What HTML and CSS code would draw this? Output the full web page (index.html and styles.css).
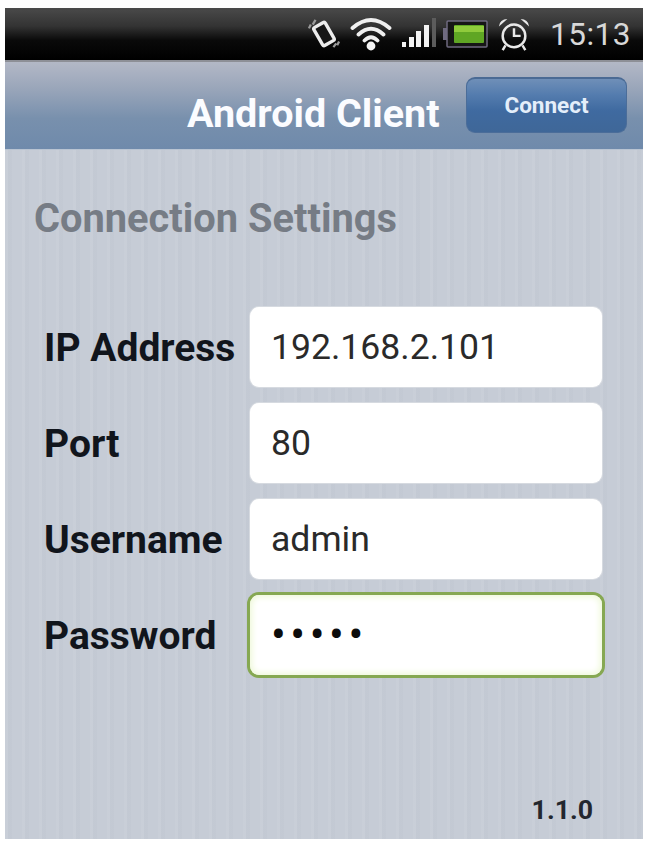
FILE: index.html
```html
<!DOCTYPE html>
<html lang="en">
<head>
<meta charset="utf-8">
<title>Android Client</title>
<link rel="stylesheet" href="styles.css">
</head>
<body>
<main class="screen">
  <div class="status-bar">
    <svg class="icon icon-vibrate" viewBox="0 0 34 34" aria-hidden="true">
      <rect x="10" y="6" width="14" height="22" rx="2" transform="rotate(-30 17 17)" fill="#161616" stroke="#ececec" stroke-width="3.6"/>
      <path d="M3 7 L1 11 M8 2 L5 7 M27 31 L30 27 M31 29 L33 25" stroke="#9a9a9a" stroke-width="2.4" fill="none"/>
    </svg>
    <svg class="icon icon-wifi" viewBox="0 0 42 34" aria-hidden="true">
      <path d="M2.5 11 Q21 -5 39.5 11 M8.5 17.5 Q21 6 33.5 17.5 M14.5 23.5 Q21 17 27.5 23.5" fill="none" stroke="#f0f0f0" stroke-width="3.8" stroke-linecap="round"/>
      <circle cx="21" cy="29" r="4.4" fill="#f4f4f4"/>
    </svg>
    <svg class="icon icon-signal" viewBox="0 0 36 34" aria-hidden="true">
      <rect x="1" y="25" width="4" height="5" fill="#f2f2f2"/>
      <rect x="8" y="20" width="5" height="10" fill="#f2f2f2"/>
      <rect x="15" y="14" width="5" height="16" fill="#f2f2f2"/>
      <rect x="23" y="8" width="5" height="22" fill="#f2f2f2"/>
      <rect x="31" y="1" width="4" height="29" fill="#5c5c5c"/>
    </svg>
    <svg class="icon icon-battery" viewBox="0 0 46 30" aria-hidden="true">
      <rect x="4" y="2" width="40" height="26" rx="1" fill="#161616" stroke="#6f6a80" stroke-width="1.5"/>
      <rect x="0" y="9" width="4" height="12" fill="#6f6a80"/>
      <rect x="11" y="6" width="30" height="18" rx="1" fill="#5fa624"/>
      <rect x="11" y="7" width="30" height="6" fill="#8fcb3c"/>
    </svg>
    <svg class="icon icon-alarm" viewBox="0 0 36 36" aria-hidden="true">
      <circle cx="18" cy="20" r="12" fill="none" stroke="#e8e8e8" stroke-width="2.6"/>
      <path d="M18 12 V20 H25" fill="none" stroke="#e8e8e8" stroke-width="2.6"/>
      <path d="M2 10 Q3 2 11 2 Z M34 10 Q33 2 25 2 Z" fill="#e8e8e8"/>
      <path d="M9 30 L6 35 M27 30 L30 35" stroke="#e8e8e8" stroke-width="2.6"/>
    </svg>
    <span class="clock">15:13</span>
  </div>

  <header class="app-bar">
    <h1 class="app-title">Android Client</h1>
    <button class="connect" type="button">Connect</button>
  </header>

  <section class="content">
    <h2 class="section-title">Connection Settings</h2>
    <div class="form">
      <span class="label">IP Address</span>
      <div class="field">192.168.2.101</div>
      <span class="label">Port</span>
      <div class="field">80</div>
      <span class="label">Username</span>
      <div class="field">admin</div>
      <span class="label">Password</span>
      <div class="field field-focus"><span class="dots">•••••</span></div>
    </div>
    <p class="version">1.1.0</p>
  </section>
</main>
</body>
</html>
```
FILE: styles.css
```css
* {
  box-sizing: border-box;
}

html,
body {
  height: 100%;
}

body {
  margin: 0;
  background: #fff;
  font-family: Roboto, "Liberation Sans", sans-serif;
  padding: 8px 2px 4px 5px;
}

.screen {
  height: 100%;
  display: flex;
  flex-direction: column;
}

.status-bar {
  height: 52px;
  flex: none;
  display: flex;
  align-items: center;
  justify-content: flex-end;
  padding: 0 12px 0 0;
  background: linear-gradient(#4a4a4a 0%, #333 35%, #0a0a0a 62%, #000 100%);
}

.icon {
  display: block;
  flex: none;
}

.icon-vibrate {
  width: 32px;
  height: 32px;
  margin-right: 10px;
}

.icon-wifi {
  width: 42px;
  height: 34px;
  margin-right: 9px;
}

.icon-signal {
  width: 36px;
  height: 34px;
  margin-right: 6px;
}

.icon-battery {
  width: 46px;
  height: 30px;
  margin-right: 8px;
}

.icon-alarm {
  width: 34px;
  height: 34px;
  margin-right: 19px;
}

.clock {
  font-size: 31.5px;
  color: #d8d8d8;
  letter-spacing: 0.5px;
}

.app-bar {
  height: 90px;
  flex: none;
  display: flex;
  align-items: center;
  padding: 0 16px 0 182px;
  border-top: 2px solid #8d8f96;
  border-bottom: 1px solid #b9c4d2;
  background: linear-gradient(#b3b8c6 0%, #9aa6ba 30%, #7890ad 65%, #6f8aab 100%);
}

.app-title {
  margin: 16px 0 0;
  font-size: 39.5px;
  font-weight: 700;
  color: #fbfcff;
  white-space: nowrap;
}

.connect {
  margin: -2px 0 0 auto;
  width: 161px;
  height: 56px;
  border: 1px solid #4b6d99;
  border-top: 2px solid #4a6a94;
  border-radius: 9px;
  background: linear-gradient(#6f8fb8 0%, #547cae 30%, #3f6aa0 60%, #3f6798 100%);
  color: #e4eefa;
  font-family: inherit;
  font-size: 22.5px;
  font-weight: 700;
  padding: 0;
}

.content {
  flex: 1;
  display: flex;
  flex-direction: column;
  padding: 0 41px 0 29px;
  background-color: #c6ccd6;
  background-image: repeating-linear-gradient(90deg, rgba(255, 255, 255, 0.05) 0 3px, rgba(120, 130, 145, 0.035) 3px 7px, rgba(255, 255, 255, 0) 7px 17px);
}

.section-title {
  margin: 46px 0 0;
  font-size: 39.8px;
  line-height: 46px;
  font-weight: 700;
  color: #767c85;
  white-space: nowrap;
}

.form {
  margin-top: 65px;
  display: grid;
  grid-template-columns: 216px 1fr;
  grid-auto-rows: 80px;
  row-gap: 16px;
  align-items: center;
}

.label {
  padding: 2px 0 0 10px;
  font-size: 39px;
  font-weight: 700;
  color: #11151c;
  white-space: nowrap;
}

.field {
  height: 80px;
  display: flex;
  align-items: center;
  padding: 0 21px;
  border-radius: 9px;
  background: #fff;
  box-shadow: 0 0 0 1px #d6dae0;
  font-size: 35.6px;
  color: #2a2a2a;
}

.field-focus {
  box-shadow: 0 0 0 3px #86a852, inset 0 0 6px 2px #eef8d8;
}

.dots {
  font-size: 44px;
  letter-spacing: 4.5px;
  color: #0c0c0c;
}

.version {
  margin: auto 9px 13px 0;
  text-align: right;
  font-size: 26.7px;
  font-weight: 700;
  color: #23272e;
}
```
